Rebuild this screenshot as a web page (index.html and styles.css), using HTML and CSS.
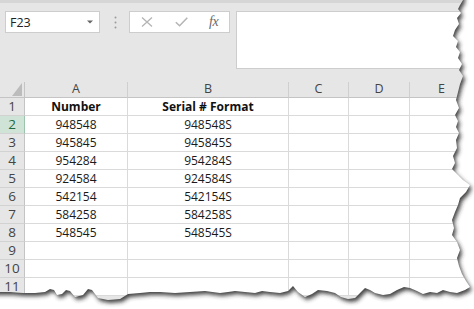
FILE: index.html
```html
<!DOCTYPE html>
<html>
<head>
<meta charset="utf-8">
<link rel="stylesheet" href="styles.css">
</head>
<body>
<div class="app">
  <div class="toolbar">
    <div class="namebox">
      <span class="ref">F23</span>
      <svg class="caret" width="6" height="4" viewBox="0 0 6 4"><path d="M0 0.5H6L3 3.5Z" fill="#666"/></svg>
    </div>
    <div class="grip">
      <svg width="3" height="13" viewBox="0 0 3 13"><circle cx="1.5" cy="1.5" r="1" fill="#9a9a9a"/><circle cx="1.5" cy="6.5" r="1" fill="#9a9a9a"/><circle cx="1.5" cy="11.5" r="1" fill="#9a9a9a"/></svg>
    </div>
    <div class="fxbtns">
      <svg class="ico" width="12" height="10" viewBox="0 0 12 10"><path d="M1 0.5L11 9.5M11 0.5L1 9.5" stroke="#b4b4b4" stroke-width="1.3" fill="none"/></svg>
      <svg class="ico" width="13" height="10" viewBox="0 0 13 10"><path d="M0.8 5.2L4.6 8.8L12.3 0.8" stroke="#b4b4b4" stroke-width="1.5" fill="none"/></svg>
      <span class="fx">fx</span>
    </div>
    <div class="formula"></div>
  </div>
  <div class="sheet">
    <div class="corner"><svg width="10" height="13" viewBox="0 0 10 13"><path d="M10 0V13H0Z" fill="#bcbcbc"/></svg></div>
    <div class="colhead">A</div>
    <div class="colhead">B</div>
    <div class="colhead">C</div>
    <div class="colhead">D</div>
    <div class="colhead">E</div>

    <div class="rowhead">1</div><div class="cell b">Number</div><div class="cell b">Serial # Format</div><div class="cell"></div><div class="cell"></div><div class="cell"></div>
    <div class="rowhead sel">2</div><div class="cell">948548</div><div class="cell">948548S</div><div class="cell"></div><div class="cell"></div><div class="cell"></div>
    <div class="rowhead">3</div><div class="cell">945845</div><div class="cell">945845S</div><div class="cell"></div><div class="cell"></div><div class="cell"></div>
    <div class="rowhead">4</div><div class="cell">954284</div><div class="cell">954284S</div><div class="cell"></div><div class="cell"></div><div class="cell"></div>
    <div class="rowhead">5</div><div class="cell">924584</div><div class="cell">924584S</div><div class="cell"></div><div class="cell"></div><div class="cell"></div>
    <div class="rowhead">6</div><div class="cell">542154</div><div class="cell">542154S</div><div class="cell"></div><div class="cell"></div><div class="cell"></div>
    <div class="rowhead">7</div><div class="cell">584258</div><div class="cell">584258S</div><div class="cell"></div><div class="cell"></div><div class="cell"></div>
    <div class="rowhead">8</div><div class="cell">548545</div><div class="cell">548545S</div><div class="cell"></div><div class="cell"></div><div class="cell"></div>
    <div class="rowhead">9</div><div class="cell"></div><div class="cell"></div><div class="cell"></div><div class="cell"></div><div class="cell"></div>
    <div class="rowhead">10</div><div class="cell"></div><div class="cell"></div><div class="cell"></div><div class="cell"></div><div class="cell"></div>
    <div class="rowhead">11</div><div class="cell"></div><div class="cell"></div><div class="cell"></div><div class="cell"></div><div class="cell"></div>
  </div>
  <svg class="tear" width="474" height="309" viewBox="0 0 474 309">
    <defs>
      <clipPath id="outside">
        <path clip-rule="evenodd" d="M0 0H474V309H0Z M0,0 L463,0 L460,5 L458,9 L461,13 L457,18 L459,24 L455,30 L453,36 L458,41 L456,47 L460,52 L458,58 L462,64 L459,70 L463,76 L460,84 L458,92 L456,100 L459,108 L455,115 L458,121 L456,127 L459,133 L456,140 L457,148 L453,156 L455,163 L452,169 L458,175 L463,180 L470,185 L466,192 L460,198 L458,205 L455,212 L452,220 L454,228 L452,235 L457,242 L460,250 L457,258 L459,266 L462,274 L466,281 L470,287 L465,290 L457,293 L450,292 L443,290 L437,293 L430,292 L423,294 L417,291 L410,288 L404,287 L397,290 L390,294 L383,295 L375,293 L370,290 L365,288 L361,292 L355,298 L348,299 L341,297 L335,293 L327,291 L318,290 L312,294 L305,297 L298,292 L293,286 L288,291 L280,293 L270,292 L262,291 L255,293 L245,292 L235,291 L228,292 L220,293 L205,291 L190,292 L175,293 L160,292 L150,292 L140,293 L128,294 L120,299 L108,300 L98,298 L92,290 L88,289 L83,295 L75,297 L70,291 L66,290 L62,294 L57,295 L54,290 L50,289 L45,292 L35,293 L23,293 L10,292 L0,292 Z"/>
      </clipPath>
      <filter id="blur" x="-10%" y="-10%" width="120%" height="120%">
        <feGaussianBlur stdDeviation="2"/>
      </filter>
    </defs>
    <g clip-path="url(#outside)">
      <rect width="474" height="309" fill="#ffffff"/>
      <path transform="translate(2,3)" filter="url(#blur)" fill="#2e2e2e" fill-opacity="0.9" d="M-10,-10 L463,-10 L463,0 L460,5 L458,9 L461,13 L457,18 L459,24 L455,30 L453,36 L458,41 L456,47 L460,52 L458,58 L462,64 L459,70 L463,76 L460,84 L458,92 L456,100 L459,108 L455,115 L458,121 L456,127 L459,133 L456,140 L457,148 L453,156 L455,163 L452,169 L458,175 L463,180 L470,185 L466,192 L460,198 L458,205 L455,212 L452,220 L454,228 L452,235 L457,242 L460,250 L457,258 L459,266 L462,274 L466,281 L470,287 L465,290 L457,293 L450,292 L443,290 L437,293 L430,292 L423,294 L417,291 L410,288 L404,287 L397,290 L390,294 L383,295 L375,293 L370,290 L365,288 L361,292 L355,298 L348,299 L341,297 L335,293 L327,291 L318,290 L312,294 L305,297 L298,292 L293,286 L288,291 L280,293 L270,292 L262,291 L255,293 L245,292 L235,291 L228,292 L220,293 L205,291 L190,292 L175,293 L160,292 L150,292 L140,293 L128,294 L120,299 L108,300 L98,298 L92,290 L88,289 L83,295 L75,297 L70,291 L66,290 L62,294 L57,295 L54,290 L50,289 L45,292 L35,293 L23,293 L10,292 L-10,292 Z"/>
    </g>
  </svg>
</div>
</body>
</html>
```

FILE: styles.css
```css
* { box-sizing: border-box; }
html, body { margin: 0; padding: 0; background: #ffffff; }
.app {
  position: relative;
  width: 474px;
  height: 309px;
  overflow: hidden;
  background: #e6e6e6;
  font-family: "Open Sans", "Noto Sans", sans-serif;
}
.toolbar {
  height: 82px;
  border-top: 3px solid #d6d6d6;
  padding-top: 8px;
  display: flex;
  align-items: flex-start;
}
.namebox {
  margin-left: 5px;
  width: 95px;
  height: 22px;
  background: #ffffff;
  border: 1px solid #cdcdcd;
  display: flex;
  align-items: center;
  padding: 0 6px 0 4px;
  justify-content: space-between;
}
.ref { font-size: 12.5px; color: #222; }
.grip {
  width: 29px;
  height: 22px;
  display: flex;
  align-items: center;
  justify-content: center;
  padding-left: 1px;
}
.fxbtns {
  width: 101px;
  height: 22px;
  background: #ffffff;
  border: 1px solid #cdcdcd;
  display: flex;
  align-items: center;
  padding-left: 11px;
  gap: 22px;
}
.fx {
  font-family: "Liberation Serif", "DejaVu Serif", serif;
  font-style: italic;
  font-size: 14px;
  color: #6a6a6a;
  margin-left: -1px;
  letter-spacing: -0.5px;
}
.formula {
  margin-left: 6px;
  flex: 1;
  height: 58px;
  background: #ffffff;
  border: 1px solid #cdcdcd;
  border-right: none;
}
.sheet {
  display: grid;
  grid-template-columns: 25px 103px 161px 60px 61px 64px;
  grid-template-rows: 16px repeat(11, 18px);
  background: #ffffff;
  width: 474px;
}
.corner {
  background: #e6e6e6;
  border-right: 1px solid #c4c4c4;
  border-bottom: 1px solid #c4c4c4;
  display: flex;
  align-items: flex-end;
  justify-content: flex-end;
  padding: 0 2px 1px 0;
}
.colhead {
  background: #e6e6e6;
  border-right: 1px solid #cfcfcf;
  border-bottom: 1px solid #c4c4c4;
  font-size: 12.5px;
  color: #444;
  display: flex;
  align-items: center;
  justify-content: center;
  line-height: 1;
}
.rowhead {
  background: #e6e6e6;
  border-right: 1px solid #c4c4c4;
  border-bottom: 1px solid #d2d2d2;
  font-size: 13.5px;
  color: #444;
  display: flex;
  align-items: center;
  justify-content: center;
  line-height: 1;
}
.rowhead.sel {
  background: #cfe4d7;
  color: #1f6a40;
  border-right: 1px solid #9cc4ad;
}
.cell {
  border-right: 1px solid #dadada;
  border-bottom: 1px solid #dadada;
  font-size: 12px;
  color: #1a1a1a;
  display: flex;
  align-items: center;
  justify-content: center;
  line-height: 1;
}
.cell.b { font-weight: 700; color: #111; }
.tear {
  position: absolute;
  left: 0;
  top: 0;
  pointer-events: none;
}
```
